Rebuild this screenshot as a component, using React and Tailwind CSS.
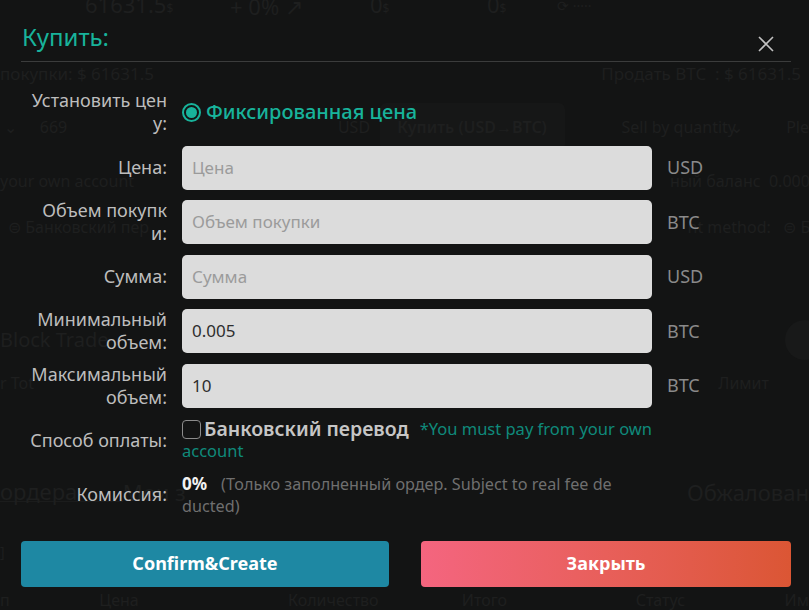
import React from "react";

const FONT = { fontFamily: '"Noto Sans", "Open Sans", sans-serif' };

function BackgroundPage() {
  return (
    <div className="flex flex-col text-[#1e1f1f] text-[16px] leading-[20px] overflow-hidden h-[610px]">
      <div className="flex items-center h-[20px] -mt-[4px] text-[22px] whitespace-nowrap">
        <span className="ml-[85px] w-[145px]">61631.5<span className="text-[12px]">$</span></span>
        <span className="w-[140px]">+ 0% ↗</span>
        <span className="w-[117px]">0<span className="text-[12px]">$</span></span>
        <span className="w-[70px]">0<span className="text-[12px]">$</span></span>
        <span className="text-[14px]">⟳ ·····</span>
      </div>
      <div className="flex items-center justify-between h-[24px] mt-[46px] text-[17px] pr-[8px] whitespace-nowrap">
        <span>покупки: $ 61631.5</span>
        <span>Продать BTC &nbsp;: $ 61631.5</span>
      </div>
      <div className="flex items-center h-[48px] mt-[18px] whitespace-nowrap">
        <span className="ml-[4px] w-[36px]">⌄</span>
        <span className="w-[300px]">669</span>
        <span className="w-[42px]">USD</span>
        <div className="w-[186px] h-[48px] rounded-[6px] bg-[#161717] flex items-center justify-center font-semibold">
          Купить (USD→BTC)
        </div>
        <span className="ml-[57px] w-[108px]">Sell by quantity</span>
        <span className="w-[57px]">⌄</span>
        <span>Ple</span>
      </div>
      <div className="flex items-center justify-between h-[20px] mt-[20px] whitespace-nowrap">
        <span>your own account</span>
        <span className="mr-[-10px]">ный баланс &nbsp;0.0000</span>
      </div>
      <div className="flex items-center justify-between h-[24px] mt-[24px] whitespace-nowrap">
        <span className="ml-[8px]">⊜ Банковский пер</span>
        <span className="mr-[-20px]">nt method: &nbsp; ⊜ Бан</span>
      </div>
      <div className="flex items-center justify-between h-[44px] mt-[80px] text-[20px] whitespace-nowrap">
        <span>Block Trade</span>
        <span className="w-[40px] h-[40px] rounded-full bg-[#181919] mr-[-16px]" />
      </div>
      <div className="flex items-center justify-between h-[20px] mt-[12px] whitespace-nowrap">
        <span>r Tot</span>
        <span className="mr-[40px]">Лимит</span>
      </div>
      <div className="flex items-center h-[30px] mt-[84px] text-[22px] whitespace-nowrap">
        <span className="w-[125px] border-b border-[#1b1c1c]">ордера</span>
        <span className="w-[575px]">Мои з</span>
        <span>Обжалован</span>
      </div>
      <div className="flex items-center h-[20px] mt-[36px] text-[14px] whitespace-nowrap">
        <span className="w-[66px]">]</span>
        <span className="w-[86px]">BTC</span>
        <span className="w-[86px]">ETH</span>
        <span>USDT</span>
      </div>
      <div className="flex items-center h-[20px] mt-[28px] whitespace-nowrap">
        <span className="w-[100px]">п</span>
        <span className="w-[190px]">Цена</span>
        <span className="w-[175px]">Количество</span>
        <span className="w-[175px]">Итого</span>
        <span className="w-[150px]">Статус</span>
        <span>Им</span>
      </div>
    </div>
  );
}

function Label({ children }) {
  return (
    <div className="w-[146px] shrink-0 text-right text-[#bdbdbd] text-[18px] leading-[23px] whitespace-nowrap">
      {children}
    </div>
  );
}

function InputRow({ label, placeholder, value, unit }) {
  return (
    <div className="flex items-center h-[44px]">
      <Label>{label}</Label>
      <div className="ml-[15px] w-[470px] h-[44px] rounded-[5px] bg-[#dcdcdc] flex items-center px-[10px] text-[17px]">
        {value ? (
          <span className="text-[#2e2e2e]">{value}</span>
        ) : (
          <span className="text-[#9b9b9b]">{placeholder}</span>
        )}
      </div>
      <span className="ml-[15px] text-[18px] text-[#8a8a8a]">{unit}</span>
    </div>
  );
}

export default function App() {
  return (
    <div className="relative w-[809px] h-[610px] overflow-hidden bg-[#131414]" style={FONT}>
      <BackgroundPage />
      <div className="absolute inset-0 flex flex-col pl-[21px] pr-[18px]">
        <div className="flex items-center justify-between h-[62px] pt-[12px] border-b border-[#3b3c3c]">
          <span className="text-[24px] leading-[30px] text-[#18b39b] ml-[1px]">Купить:</span>
          <svg width="18" height="18" viewBox="0 0 18 18" className="mr-[16px] mt-[14px]">
            <path d="M2 2 L16 16 M16 2 L2 16" stroke="#c2c2c2" strokeWidth="1.6" fill="none" />
          </svg>
        </div>

        <div className="flex flex-col gap-[10.5px] mt-[27px]">
          <div className="flex items-center h-[46px]">
            <Label>
              Установить цен
              <br />
              у:
            </Label>
            <div className="ml-[15px] flex items-center">
              <span className="w-[19px] h-[19px] rounded-full border-[2px] border-[#18b39b] flex items-center justify-center">
                <span className="w-[11px] h-[11px] rounded-full bg-[#18b39b]" />
              </span>
              <span className="ml-[5px] text-[20px] font-medium text-[#18b39b] leading-[24px]">
                Фиксированная цена
              </span>
            </div>
          </div>

          <InputRow label="Цена:" placeholder="Цена" unit="USD" />
          <InputRow
            label={
              <>
                Объем покупк
                <br />
                и:
              </>
            }
            placeholder="Объем покупки"
            unit="BTC"
          />
          <InputRow label="Сумма:" placeholder="Сумма" unit="USD" />
          <InputRow
            label={
              <>
                Минимальный
                <br />
                объем:
              </>
            }
            value="0.005"
            unit="BTC"
          />
          <InputRow
            label={
              <>
                Максимальный
                <br />
                объем:
              </>
            }
            value="10"
            unit="BTC"
          />

          <div className="flex items-center h-[44px]">
            <Label>Способ оплаты:</Label>
            <div className="ml-[15px] w-[480px] text-[16.5px] leading-[22px]">
              <div className="flex items-center whitespace-nowrap">
                <span className="w-[19px] h-[19px] rounded-[4px] border-[1.5px] border-[#8c8c8c]" />
                <span className="ml-[3px] text-[19.5px] font-semibold text-[#c6c6c6]">Банковский перевод</span>
                <span className="ml-[11px] text-[#0f8a7b]">*You must pay from your own</span>
              </div>
              <div className="text-[#0f8a7b]">account</div>
            </div>
          </div>

          <div className="flex items-center h-[44px]">
            <Label>Комиссия:</Label>
            <div className="ml-[15px] w-[480px] text-[16.2px] leading-[22px] text-[#6f6f6f]">
              <div className="whitespace-nowrap">
                <span className="text-[17px] font-bold text-[#f2f2f2]">0%</span>
                <span className="ml-[14px]">(Только заполненный ордер. Subject to real fee de</span>
              </div>
              <div>ducted)</div>
            </div>
          </div>
        </div>

        <div className="flex gap-[32px] mt-[24px]">
          <button className="w-[368px] h-[46px] rounded-[4px] bg-[#1e88a3] text-white text-[18px] font-bold">
            Confirm&amp;Create
          </button>
          <button className="w-[370px] h-[46px] rounded-[4px] bg-gradient-to-r from-[#f4657f] via-[#e85f5a] to-[#db5634] text-white text-[18px] font-bold">
            Закрыть
          </button>
        </div>
      </div>
    </div>
  );
}
